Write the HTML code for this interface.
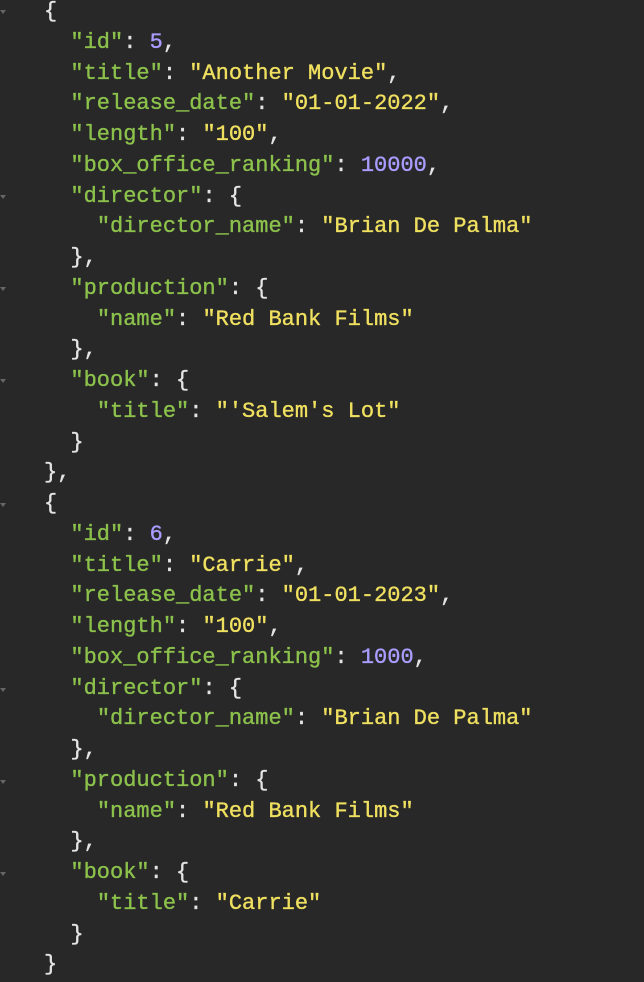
<!DOCTYPE html>
<html><head><meta charset="utf-8"><style>
html,body{margin:0;padding:0;background:#282828;width:644px;height:982px;overflow:hidden}
pre{margin:0;position:absolute;left:44px;top:-3px;font-family:"Liberation Mono",monospace;font-size:22px;line-height:30.75px;color:#e4e4e4;-webkit-text-stroke:0.35px currentColor}
.k{color:#8cc24c}.s{color:#f0e060}.n{color:#a99cff}
.t{position:absolute;left:0;width:0;height:0;border-left:3px solid transparent;border-right:3px solid transparent;border-top:4px solid #666}
</style></head><body>
<div class="t" style="top:195px"></div>
<div class="t" style="top:287px"></div>
<div class="t" style="top:379px"></div>
<div class="t" style="top:503px"></div>
<div class="t" style="top:688px"></div>
<div class="t" style="top:780px"></div>
<div class="t" style="top:872px"></div>
<div class="t" style="top:10px"></div>
<pre>{
  <span class="k">"id"</span>: <span class="n">5</span>,
  <span class="k">"title"</span>: <span class="s">"Another Movie"</span>,
  <span class="k">"release_date"</span>: <span class="s">"01-01-2022"</span>,
  <span class="k">"length"</span>: <span class="s">"100"</span>,
  <span class="k">"box_office_ranking"</span>: <span class="n">10000</span>,
  <span class="k">"director"</span>: {
    <span class="k">"director_name"</span>: <span class="s">"Brian De Palma"</span>
  },
  <span class="k">"production"</span>: {
    <span class="k">"name"</span>: <span class="s">"Red Bank Films"</span>
  },
  <span class="k">"book"</span>: {
    <span class="k">"title"</span>: <span class="s">"'Salem's Lot"</span>
  }
},
{
  <span class="k">"id"</span>: <span class="n">6</span>,
  <span class="k">"title"</span>: <span class="s">"Carrie"</span>,
  <span class="k">"release_date"</span>: <span class="s">"01-01-2023"</span>,
  <span class="k">"length"</span>: <span class="s">"100"</span>,
  <span class="k">"box_office_ranking"</span>: <span class="n">1000</span>,
  <span class="k">"director"</span>: {
    <span class="k">"director_name"</span>: <span class="s">"Brian De Palma"</span>
  },
  <span class="k">"production"</span>: {
    <span class="k">"name"</span>: <span class="s">"Red Bank Films"</span>
  },
  <span class="k">"book"</span>: {
    <span class="k">"title"</span>: <span class="s">"Carrie"</span>
  }
}</pre>
</body></html>
